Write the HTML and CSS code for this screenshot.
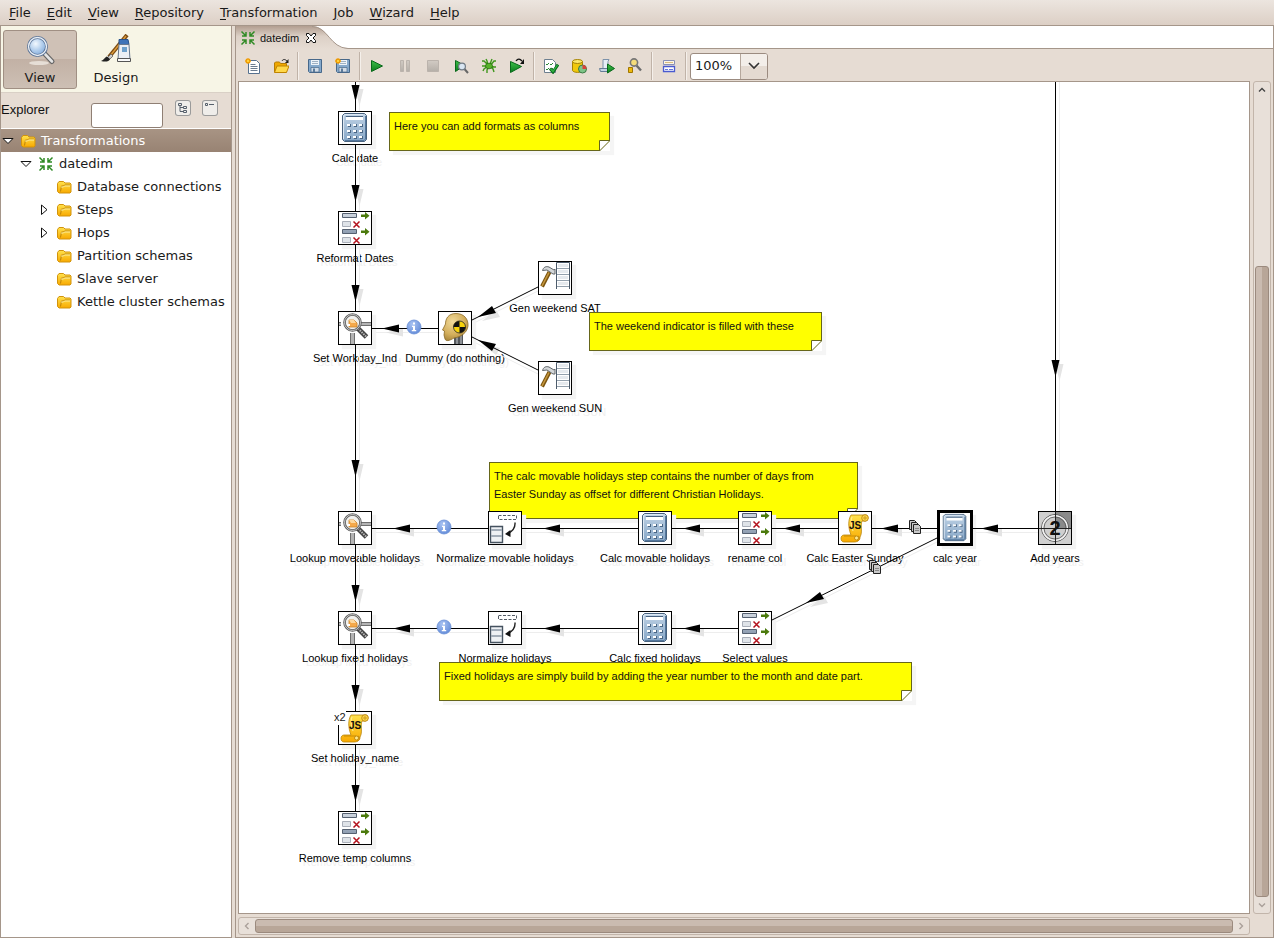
FILE: index.html
```html
<!DOCTYPE html>
<html lang="en">
<head>
<meta charset="utf-8">
<title>datedim</title>
<link rel="stylesheet" href="styles.css">
</head>
<body>
<svg class="sprite" width="0" height="0" aria-hidden="true">
  <defs>
    <linearGradient id="gBlue" x1="0" y1="0" x2="0" y2="1"><stop offset="0" stop-color="#c0d3e6"/><stop offset="1" stop-color="#86a6c6"/></linearGradient>
    <linearGradient id="gFolder" x1="0" y1="0" x2="0" y2="1"><stop offset="0" stop-color="#ffe24d"/><stop offset="1" stop-color="#f8a900"/></linearGradient>
    <linearGradient id="gGreen" x1="0" y1="0" x2="0" y2="1"><stop offset="0" stop-color="#3fbf4a"/><stop offset="1" stop-color="#0a7d1c"/></linearGradient>
    <linearGradient id="gGray" x1="0" y1="0" x2="0" y2="1"><stop offset="0" stop-color="#d2cbc4"/><stop offset="1" stop-color="#b5afa8"/></linearGradient>
    <linearGradient id="gBar" x1="0" y1="0" x2="0" y2="1"><stop offset="0" stop-color="#cfd6df"/><stop offset="1" stop-color="#8d9cb0"/></linearGradient>
    <linearGradient id="gTab" x1="0" y1="0" x2="0" y2="1"><stop offset="0" stop-color="#b29e90"/><stop offset=".45" stop-color="#dcd0c6"/><stop offset="1" stop-color="#e6dcd3"/></linearGradient>
    <radialGradient id="gHead" cx=".4" cy=".3" r=".8"><stop offset="0" stop-color="#f0d99a"/><stop offset=".6" stop-color="#d3ae5b"/><stop offset="1" stop-color="#9c7a32"/></radialGradient>
    <radialGradient id="gInfo" cx=".4" cy=".3" r=".8"><stop offset="0" stop-color="#a9c3f2"/><stop offset="1" stop-color="#5c86d6"/></radialGradient>
    <radialGradient id="gLens" cx=".4" cy=".35" r=".7"><stop offset="0" stop-color="#f2f8fe"/><stop offset=".6" stop-color="#a9c8ea"/><stop offset="1" stop-color="#7fa6d6"/></radialGradient>
  </defs>

  <symbol id="calc" viewBox="0 0 32 32">
    <path d="M5.500 1.500h20l2 2v24l-2 2h-20l-2-2v-24z" fill="url(#gBlue)" stroke="#48627e"/>
    <path d="M26.500 4v23l-1.500 1.500H6" fill="none" stroke="#54779d"/>
    <path d="M4.500 27V4l1.500-1.500h18" fill="none" stroke="#dde8f3"/>
    <path d="M7 5h17v3H7z" fill="#fff"/><path d="M7 5V4.500h17" fill="none" stroke="#47617f"/>
    <g fill="#4a6685"><path d="M9 12h3v3H9zM15 12h3v3h-3zM21 12h3v3h-3zM9 18h3v3H9zM15 18h3v3h-3zM21 18h3v3h-3zM9 24h3v3H9zM15 24h3v3h-3zM21 24h3v3h-3z"/></g>
    <g fill="#fff"><path d="M8 12h3v2H8zM14 12h3v2h-3zM20 12h3v2h-3zM8 18h3v2H8zM14 18h3v2h-3zM20 18h3v2h-3zM8 24h3v2H8zM14 24h3v2h-3zM20 24h3v2h-3z"/></g>
  </symbol>

  <symbol id="select" viewBox="0 0 32 32">
    <g stroke="#556070"><path d="M3.500 1.500h14v4h-14zM3.500 17.500h14v4h-14z" fill="url(#gBar)"/></g>
    <g stroke="#a9aeb8"><path d="M3.500 9.500h8v5h-8zM3.500 25.500h8v5h-8z" fill="#dfe3e8"/></g>
    <path d="M22 2.500h4V0l4.500 3.700L26 7.500V5h-4zM22 18.500h4V16l4.500 3.700L26 23.500V21h-4z" fill="#4b7a0c"/>
    <path d="M14.500 9.500l6 6m0-6l-6 6M14.500 25.500l6 6m0-6l-6 6" stroke="#b3121d" stroke-width="1.500"/>
  </symbol>

  <symbol id="lookup" viewBox="0 0 32 32">
    <g fill="#b4b4b4" stroke="#6f6f6f"><path d="M-1 10.500h34v3H-1z"/><path d="M11.500 20v13h4V20z"/></g>
    <path d="M2 8v8l6 5h11l3-4V8z" fill="#fff"/>
    <path d="M19 16.500L27.500 25" stroke="#444" stroke-width="5"/>
    <path d="M19 16.500L27.500 25" stroke="#b5b5b5" stroke-width="2" stroke-dasharray="1.500 1"/>
    <circle cx="13.500" cy="10.500" r="8" fill="#f1f1ee" stroke="#5b5b5b" stroke-width="2.600"/>
    <circle cx="13.500" cy="10.500" r="8" fill="none" stroke="#c9c9c9" stroke-width="1"/>
    <path d="M10 8h5l3 3v4h-8z" fill="#f5a94a" stroke="#c9832a" stroke-width=".8"/>
    <path d="M8 12h3v2H8z" fill="#fff"/><path d="M10 8h5l2 3h-5z" fill="#fcd9a0"/>
  </symbol>

  <symbol id="dummy" viewBox="0 0 32 32">
    <path d="M15 22h9v10h-9z" fill="#55585c"/><path d="M17 23h2v9h-2zM21 23h2v9h-2z" fill="#8d9196"/>
    <path d="M17 1.500C9 1.500 6.500 7 6.500 12L3.500 18l2 1-.5 4 1 4c1 2.500 4 2 9-1 7-1 13-5 14-12C29.500 7 25 1.500 17 1.500z" fill="url(#gHead)" stroke="#8a6a26" stroke-width=".8"/>
    <circle cx="20.500" cy="15" r="6" fill="#f7d20a" stroke="#222" stroke-width=".8"/>
    <path d="M20.500 15V9a6 6 0 0 0-6 6zM20.500 15v6a6 6 0 0 0 6-6z" fill="#111"/>
  </symbol>

  <symbol id="gen" viewBox="0 0 32 32">
    <path d="M17.500.500h13v27h-13z" fill="#fff"/><path d="M17.500 27V.500h13V27" fill="none" stroke="#4c5b6b"/>
    <path d="M19 2h10v3H19zM19 8h10v3H19zM19 14h10v3H19zM19 20h10v3H19z" fill="#e6eaee"/>
    <path d="M18 6.500h12M18 12.500h12M18 18.500h12M18 24.500h12" stroke="#94a1ad"/>
    <path d="M3 24.500L10.500 10" stroke="#7a5410" stroke-width="4"/>
    <path d="M3 24L10 10.500" stroke="#c5973d" stroke-width="1.600"/>
    <path d="M3.500 8.500C4.500 5 7 4 10 5l5 3 1-1v5h-2l-3-2-3-2z" fill="#d5d8da" stroke="#60666a"/>
  </symbol>

  <symbol id="normalize" viewBox="0 0 32 32">
    <path d="M9.500 3.500h18v4h-18z" fill="none" stroke="#555c66" stroke-dasharray="3 1.500"/>
    <path d="M1.500 14.500h12v16h-12z" fill="#eef1f4" stroke="#45525f" stroke-width="1.400"/>
    <path d="M2 17h11v2H2zM2 23h11v2H2z" fill="#a3adb8"/>
    <path d="M26 10.500c.5 6-3 9-7 11" fill="none" stroke="#222" stroke-width="1.400"/><path d="M16 22l5.500-4v7z" fill="#111"/>
  </symbol>

  <symbol id="js" viewBox="0 0 32 32">
    <path d="M12 3h14c4-1 4 6 0 6h-3c-2 5 1 11-2 16-1 4-3 5-6 5H5c-4 0-4-7 0-7h7C9 15 9 8 12 3z" fill="url(#gFolder)" stroke="#b98408" stroke-width=".8"/>
    <circle cx="26" cy="6" r="3.300" fill="#ffd94f" stroke="#b57c05" stroke-width=".8"/><circle cx="26" cy="6" r="1.200" fill="none" stroke="#b57c05" stroke-width=".7"/>
    <path d="M5 24h12M19 24c3 1 2 5-1 5" fill="none" stroke="#c98c05"/><circle cx="17.500" cy="26" r="2" fill="#ffe98c" stroke="#b57c05" stroke-width=".8"/>
    <path d="M13 5c-2 5 0 10 1 14" fill="none" stroke="#fff0a0"/>
  </symbol>

  <symbol id="sequence" viewBox="0 0 32 32">
    <path d="M0 0h32v32H0z" fill="#cfcfcf"/><path d="M16 0h16v16H16z" fill="#8a8a8a"/>
    <circle cx="16" cy="16" r="13.500" fill="none" stroke="#555"/><circle cx="16" cy="16" r="12.300" fill="none" stroke="#f2f2f2" stroke-width="1.500"/>
    <circle cx="16" cy="16" r="11" fill="none" stroke="#555" stroke-width=".8"/>
    <path d="M0 16.500h32M16.500 0v32" stroke="#222"/>
  </symbol>

  <symbol id="folder" viewBox="0 0 16 16">
    <path d="M1.500 4.500l1.500-2h4.500l1.500 1.500h5l1 1v8l-1 1h-11l-1.500-1.500z" fill="url(#gFolder)" stroke="#d2930c"/>
    <path d="M4.500 12.500l1-5.500h2l1-1h5.500" fill="none" stroke="#b87d05" stroke-width=".9"/><path d="M5 8h2.500l1-1h5.500" fill="none" stroke="#fff3a8" stroke-width=".9"/>
  </symbol>

  <symbol id="trans" viewBox="0 0 16 16">
    <g stroke="#2f8a25" stroke-width="1.500" fill="none"><path d="M1.500 1.500l4 4M6 2v4H2M14.500 1.500l-4 4M10 2v4h4M1.500 14.500l4-4M6 14v-4H2M14.500 14.500l-4-4M10 14v-4h4"/></g>
  </symbol>

  <symbol id="info" viewBox="0 0 16 16">
    <circle cx="8" cy="8" r="7" fill="url(#gInfo)" stroke="#6b90d6" stroke-width=".8"/>
    <path d="M7 3.500h2v2H7zM6 6.700h3v4.300h1.200v1.300H5.800V11H7V8H6z" fill="#fff"/>
  </symbol>
  <symbol id="copies" viewBox="0 0 14 14">
    <g fill="#c9c9c9" stroke="#222"><path d="M1.500.500h5l2 2v7h-7z"/><path d="M3.500 2.500h5l2 2v7h-7z"/><path d="M5.500 4.500h5l2 2v7h-7z"/></g>
    <path d="M7 8.500h4M7 10.500h4" stroke="#777" stroke-width=".8"/>
  </symbol>

  <symbol id="page" viewBox="0 0 16 16"><path d="M3.500 2.500h8l3 3v10h-11z" fill="#fff" stroke="#56718f"/><path d="M5.500 6.500h5M5.500 8.500h7M5.500 10.500h7M5.500 12.500h7" stroke="#6a7c90"/></symbol>
  <symbol id="star" viewBox="0 0 16 16"><path d="M3 0v6M0 3h6M1 1l4 4M5 1L1 5" stroke="#f09a00" stroke-width="1.300"/><circle cx="3" cy="3" r="1.200" fill="#ffd23c"/></symbol>
  <symbol id="disk" viewBox="0 0 16 16"><path d="M1.500 1.500h13v13h-12l-1-1z" fill="#86a9cb" stroke="#47688a"/><path d="M4 2h8v5H4z" fill="#eef3f8"/><path d="M5 3.500h6M5 5.500h6" stroke="#8aa0b5" stroke-width=".8"/><path d="M4 9.500h8V14H4z" fill="#d3dce6" stroke="#47688a" stroke-width=".7"/><path d="M6 10.500h2V14H6z" fill="#5b7a9a"/></symbol>
  <symbol id="play" viewBox="0 0 16 16"><path d="M2.500 2.500l11 5.500-11 5.500z" fill="url(#gGreen)" stroke="#08691a"/></symbol>
</svg>

<nav class="menubar" aria-label="Main menu">
  <button class="menu"><u>F</u>ile</button>
  <button class="menu"><u>E</u>dit</button>
  <button class="menu"><u>V</u>iew</button>
  <button class="menu"><u>R</u>epository</button>
  <button class="menu"><u>T</u>ransformation</button>
  <button class="menu"><u>J</u>ob</button>
  <button class="menu"><u>W</u>izard</button>
  <button class="menu"><u>H</u>elp</button>
</nav>

<main class="workspace">
  <aside class="sidebar">
    <div class="modes">
      <button class="mode mode-active" aria-pressed="true">
        <svg width="32" height="32" viewBox="0 0 32 32"><ellipse cx="15" cy="29" rx="10" ry="2" fill="#e6ded6"/><path d="M20 19l8 8.500" stroke="#666" stroke-width="5" stroke-linecap="round"/><path d="M20.500 19.500l7.500 8" stroke="#e4e4e4" stroke-width="2.600" stroke-linecap="round"/><circle cx="13.500" cy="12.500" r="9" fill="url(#gLens)" stroke="#5a7396" stroke-width="3"/><circle cx="13.500" cy="12.500" r="9" fill="none" stroke="#e8eef5" stroke-width="1.400"/></svg>
        <span>View</span>
      </button>
      <button class="mode" aria-pressed="false">
        <svg width="32" height="32" viewBox="0 0 32 32"><path d="M9 23L27 1" stroke="#7b4a12" stroke-width="4"/><path d="M10 22L26 2" stroke="#dc9c3c" stroke-width="1.400"/><path d="M7 24l4-4 2 2-4 4z" fill="#ccc" stroke="#555" stroke-width=".7"/><path d="M1 27c3-1 4-4 6-4.500L10 25c-1 3-5 3-9 2z" fill="#222"/><path d="M19 5.500h9l1 5h-10z" fill="#3f73b8" stroke="#27518c"/><path d="M19 10.500h10l1 15H18z" fill="#eceff4" stroke="#68788e"/><path d="M22 13h5v5h-5z" fill="#6fa1cc"/><path d="M17.500 24.500h13v3h-13z" fill="#fafafa" stroke="#555"/></svg>
        <span>Design</span>
      </button>
    </div>
    <div class="explorer">
      <label for="filter">Explorer</label>
      <input id="filter" class="filter" type="text">
      <button class="mini" aria-label="Expand all"><svg width="16" height="16" viewBox="0 0 16 16"><path d="M3.500 3.500h3v2h-3zM8.500 6.500h3v2h-3zM8.500 10.500h3v2h-3zM5 6v5.500h3.500M5 7.500h3.500" fill="none" stroke="#56606c"/></svg></button>
      <button class="mini" aria-label="Collapse all"><svg width="16" height="16" viewBox="0 0 16 16"><path d="M3.500 3.500h2v2h-2zM7 4.500h5" fill="none" stroke="#56606c"/></svg></button>
    </div>
    <div class="tree" role="tree">
      <button class="row row-selected" role="treeitem" aria-expanded="true"><svg class="twist" viewBox="0 0 12 12"><path d="M1 3.500h10L6 8.500z" fill="#fff" stroke="#111"/></svg><svg class="icon"><use href="#folder"/></svg>Transformations</button>
      <button class="row level-2" role="treeitem" aria-expanded="true"><svg class="twist" viewBox="0 0 12 12"><path d="M1 3.500h10L6 8.500z" fill="#fff" stroke="#111"/></svg><svg class="icon"><use href="#trans"/></svg>datedim</button>
      <button class="row level-3" role="treeitem"><span class="twist"></span><svg class="icon"><use href="#folder"/></svg>Database connections</button>
      <button class="row level-3" role="treeitem" aria-expanded="false"><svg class="twist" viewBox="0 0 12 12"><path d="M3.500 1v9.500L9 5.700z" fill="#fff" stroke="#111"/></svg><svg class="icon"><use href="#folder"/></svg>Steps</button>
      <button class="row level-3" role="treeitem" aria-expanded="false"><svg class="twist" viewBox="0 0 12 12"><path d="M3.500 1v9.500L9 5.700z" fill="#fff" stroke="#111"/></svg><svg class="icon"><use href="#folder"/></svg>Hops</button>
      <button class="row level-3" role="treeitem"><span class="twist"></span><svg class="icon"><use href="#folder"/></svg>Partition schemas</button>
      <button class="row level-3" role="treeitem"><span class="twist"></span><svg class="icon"><use href="#folder"/></svg>Slave server</button>
      <button class="row level-3" role="treeitem"><span class="twist"></span><svg class="icon"><use href="#folder"/></svg>Kettle cluster schemas</button>
    </div>
  </aside>

  <section class="editor">
    <div class="tabs">
      <div class="tab">
        <svg class="tab-shape" width="112" height="23" viewBox="0 0 112 23"><path d="M0 0h76c16 0 18 22 36 22.500V23H0z" fill="url(#gTab)"/><path d="M76 .500c16 0 18 21.500 36 22" fill="none" stroke="#a5968a"/></svg>
        <svg class="tab-icon"><use href="#trans"/></svg>
        <span class="tab-name">datedim</span>
        <button class="close" aria-label="Close tab"><svg width="12" height="12" viewBox="0 0 12 12"><path d="M1.500 1.500h2.500l2 2.500 2-2.500h2.500v2L8 6l2.500 2.500v2H8L6 8l-2 2.500H1.500v-2L4 6 1.500 3.500z" fill="#fff" stroke="#111"/></svg></button>
      </div>
    </div>

    <div class="toolbar" role="toolbar">
      <button class="tool" aria-label="New"><svg viewBox="0 0 16 16"><use href="#page"/><use href="#star"/></svg></button>
      <button class="tool" aria-label="Open"><svg viewBox="0 0 16 16"><path d="M1.500 14V5l1-1h4l1 1.500h6V14z" fill="#f0a800" stroke="#b57c05"/><path d="M1.500 14.500L4 8h12l-2.500 6.500z" fill="#ffd84a" stroke="#c08400"/><path d="M9 3c1-2 3-2 5 0" fill="none" stroke="#222"/><path d="M15.500 1v4H12z" fill="#222"/></svg></button>
      <span class="sep"></span>
      <button class="tool" aria-label="Save"><svg><use href="#disk"/></svg></button>
      <button class="tool" aria-label="Save as"><svg viewBox="0 0 16 16"><use href="#disk"/><use href="#star"/></svg></button>
      <span class="sep"></span>
      <button class="tool" aria-label="Run"><svg><use href="#play"/></svg></button>
      <button class="tool" aria-label="Pause" disabled><svg viewBox="0 0 16 16"><path d="M3.500 2.500h3v11h-3zM9.500 2.500h3v11h-3z" fill="url(#gGray)" stroke="#bbb3ac"/></svg></button>
      <button class="tool" aria-label="Stop" disabled><svg viewBox="0 0 16 16"><path d="M2.500 2.500h11v11h-11z" fill="url(#gGray)" stroke="#bbb3ac"/></svg></button>
      <button class="tool" aria-label="Preview"><svg viewBox="0 0 16 16"><path d="M2.500 2.500l9 5-9 6z" fill="url(#gGreen)" stroke="#08691a"/><path d="M11 10.500l4 4.500" stroke="#666" stroke-width="2"/><circle cx="9" cy="8.500" r="3.400" fill="#d9e6f2" stroke="#707a84" stroke-width="1.200"/></svg></button>
      <button class="tool" aria-label="Debug"><svg viewBox="0 0 16 16"><g fill="none" stroke="#3f971c" stroke-width="1.400"><path d="M1 3h2l4 4M5 1l1 2 1 4M11 1L9 6M15 3h-2L9 8M1 8l6 0M15 9h-2L9 8M2 13l1-2 4-3M6 15V12l2-4M13 14l-1-3L9 8"/></g><ellipse cx="8" cy="8" rx="3.500" ry="2.800" fill="#58b32a" stroke="#277010" stroke-width=".8"/></svg></button>
      <button class="tool" aria-label="Replay"><svg viewBox="0 0 16 16"><path d="M1.500 3.500l11 5-11 6z" fill="url(#gGreen)" stroke="#08691a"/><path d="M7 3c2-3 4-2 6 0" fill="none" stroke="#111" stroke-width="1.300"/><path d="M15 1v5h-4z" fill="#111"/></svg></button>
      <span class="sep"></span>
      <button class="tool" aria-label="Verify"><svg viewBox="0 0 16 16"><path d="M1.500 1.500h8l3 3v10h-11z" fill="#fff" stroke="#6d7f8f"/><path d="M3 6l1 1 2-2M7 6l1 1 2-2M3 11l1 1 2-2M7 11l1 1 2-2" fill="none" stroke="#2a8a35"/><path d="M7 10.500l3 3.500 5-7.500" fill="none" stroke="#0a6d1c" stroke-width="3"/><path d="M7.500 11l2.500 2.500L14.500 7" fill="none" stroke="#35b848" stroke-width="1.200"/></svg></button>
      <button class="tool" aria-label="Impact"><svg viewBox="0 0 16 16"><path d="M1.500 3.500v9c1 2.500 9 2.500 10 0v-9z" fill="#f0c80c" stroke="#a58200"/><ellipse cx="6.500" cy="3.500" rx="5" ry="2" fill="#fbe86a" stroke="#a58200"/><circle cx="11.500" cy="11" r="4" fill="#7ec487" stroke="#3b7a45"/><path d="M11.500 11V7a4 4 0 0 1 4 4z" fill="#d8413a"/></svg></button>
      <button class="tool" aria-label="SQL"><svg viewBox="0 0 16 16"><path d="M4 1.500h6l-1 2v9H3l1-2z" fill="#e6edf5" stroke="#7c92aa"/><path d="M.5 10.500h9v3h-8z" fill="#c7d5e4" stroke="#647c96"/><path d="M8.500 6l7 4.500-7 4.500z" fill="url(#gGreen)" stroke="#08691a"/></svg></button>
      <button class="tool" aria-label="Explore database"><svg viewBox="0 0 16 16"><path d="M9.500 7.500l4.500 5" stroke="#6c6c6c" stroke-width="2.400"/><circle cx="7" cy="4.500" r="3.600" fill="#f5dc7a" stroke="#777" stroke-width="1.600"/><path d="M1.500 9.500h4v5h-4z" fill="#edb90c" stroke="#a07600"/></svg></button>
      <span class="sep"></span>
      <button class="tool" aria-label="Show results"><svg viewBox="0 0 16 16"><path d="M2.500 2.500h11v4h-11z" fill="#fdf6e6" stroke="#8890b8"/><path d="M2.500 8.500h11v5h-11z" fill="#fff" stroke="#4a5bd0" stroke-width="1.300"/><path d="M4 4.500h8" stroke="#d9bd80"/><path d="M4 11.500h3M8 11.500h4" stroke="#6a78d8"/></svg></button>
      <span class="sep"></span>
      <div class="zoom">
        <input class="zoom-value" type="text" value="100%" aria-label="Zoom">
        <button class="zoom-open" aria-label="Zoom levels"><svg width="12" height="8" viewBox="0 0 12 8"><path d="M1 1l5 5 5-5" fill="none" stroke="#333" stroke-width="1.600"/></svg></button>
      </div>
    </div>

    <div class="view">
      <div class="canvas">
        <div class="note" style="left:150px;top:30px;width:221px">Here you can add formats as columns<svg class="fold" viewBox="0 0 11 11"><path d="M11 0v11H0z" fill="#fff"/><path d="M.500 11V.500H11z" fill="#fff" stroke="#66661a"/></svg></div>
        <div class="note" style="left:350px;top:230px;width:233px">The weekend indicator is filled with these<svg class="fold" viewBox="0 0 11 11"><path d="M11 0v11H0z" fill="#fff"/><path d="M.500 11V.500H11z" fill="#fff" stroke="#66661a"/></svg></div>
        <div class="note" style="left:250px;top:380px;width:369px">The calc movable holidays step contains the number of days from<br>Easter Sunday as offset for different Christian Holidays.<svg class="fold" viewBox="0 0 11 11"><path d="M11 0v11H0z" fill="#fff"/><path d="M.500 11V.500H11z" fill="#fff" stroke="#66661a"/></svg></div>
        <div class="note" style="left:200px;top:580px;width:473px">Fixed holidays are simply build by adding the year number to the month and date part.<svg class="fold" viewBox="0 0 11 11"><path d="M11 0v11H0z" fill="#fff"/><path d="M.500 11V.500H11z" fill="#fff" stroke="#66661a"/></svg></div>

        <div class="step" style="left:99px;top:29px"><svg class="step-icon"><use href="#calc"/></svg><span class="step-name">Calc date</span></div>
        <div class="step" style="left:99px;top:129px"><svg class="step-icon"><use href="#select"/></svg><span class="step-name">Reformat Dates</span></div>
        <div class="step" style="left:99px;top:229px"><svg class="step-icon"><use href="#lookup"/></svg><span class="step-name">Set Workday_Ind</span></div>
        <div class="step" style="left:199px;top:229px"><svg class="step-icon"><use href="#dummy"/></svg><span class="step-name">Dummy (do nothing)</span></div>
        <div class="step" style="left:299px;top:179px"><svg class="step-icon"><use href="#gen"/></svg><span class="step-name step-name-flat">Gen weekend SAT</span></div>
        <div class="step" style="left:299px;top:279px"><svg class="step-icon"><use href="#gen"/></svg><span class="step-name">Gen weekend SUN</span></div>
        <div class="step" style="left:99px;top:429px"><svg class="step-icon"><use href="#lookup"/></svg><span class="step-name">Lookup moveable holidays</span></div>
        <div class="step" style="left:249px;top:429px"><svg class="step-icon"><use href="#normalize"/></svg><span class="step-name">Normalize movable holidays</span></div>
        <div class="step" style="left:399px;top:429px"><svg class="step-icon"><use href="#calc"/></svg><span class="step-name">Calc movable holidays</span></div>
        <div class="step" style="left:499px;top:429px"><svg class="step-icon"><use href="#select"/></svg><span class="step-name">rename col</span></div>
        <div class="step" style="left:599px;top:429px"><svg class="step-icon"><use href="#js"/></svg><span class="glyph glyph-js">JS</span><span class="step-name">Calc Easter Sunday</span></div>
        <div class="step step-selected" style="left:699px;top:429px"><svg class="step-icon"><use href="#calc"/></svg><span class="step-name">calc year</span></div>
        <div class="step" style="left:799px;top:429px"><svg class="step-icon"><use href="#sequence"/></svg><span class="glyph glyph-seq">2</span><span class="step-name">Add years</span></div>
        <div class="step" style="left:99px;top:529px"><svg class="step-icon"><use href="#lookup"/></svg><span class="step-name">Lookup fixed holidays</span></div>
        <div class="step" style="left:249px;top:529px"><svg class="step-icon"><use href="#normalize"/></svg><span class="step-name step-name-flat">Normalize holidays</span></div>
        <div class="step" style="left:399px;top:529px"><svg class="step-icon"><use href="#calc"/></svg><span class="step-name step-name-flat">Calc fixed holidays</span></div>
        <div class="step" style="left:499px;top:529px"><svg class="step-icon"><use href="#select"/></svg><span class="step-name step-name-flat">Select values</span></div>
        <div class="step" style="left:99px;top:629px"><svg class="step-icon"><use href="#js"/></svg><span class="glyph glyph-js">JS</span><span class="count">x2</span><span class="step-name">Set holiday_name</span></div>
        <div class="step" style="left:99px;top:729px"><svg class="step-icon"><use href="#select"/></svg><span class="step-name">Remove temp columns</span></div>

        <svg class="hops" width="1010" height="831" viewBox="0 0 1010 831">
          <g fill="none" stroke="#ededed">
            <path d="M120.500 0V29M120.500 67V129M120.500 167V229M120.500 267V429M120.500 467V529M120.500 567V629M120.500 667V729M820.500 0V429"/>
            <path d="M137 250.500H199M137 450.500H249M287 450.500H399M437 450.500H499M537 450.500H599M637 450.500H698M737 450.500H799M137 550.500H249M287 550.500H399M437 550.500H499"/>
            <path d="M299 209L237 240M299 292L237 261M698 460L537 540"/>
          </g>
          <g fill="#e4e4e4">
            <path d="M116.500 7h8l-4 17zM116.500 107h8l-4 17zM116.500 207h8l-4 17zM116.500 382h8l-4 17zM116.500 507h8l-4 17zM116.500 607h8l-4 17zM116.500 707h8l-4 17zM816.500 282h8l-4 17z"/>
            <path d="M147 250.500l17-4v8zM158 450.500l17-4v8zM308 450.500l17-4v8zM448 450.500l17-4v8zM548 450.500l17-4v8zM646 450.500l17-4v8zM746 450.500l17-4v8zM158 550.500l17-4v8zM308 550.500l17-4v8zM448 550.500l17-4v8z"/>
            <path d="M243 239l14-11 4 7zM243 262l14 11 4-7zM571 525l14-11 4 7z"/>
          </g>
          <g fill="none" stroke="#000">
            <path d="M116.500 0V29M116.500 63V129M116.500 163V229M116.500 263V429M116.500 463V529M116.500 563V629M116.500 663V729M816.500 0V429"/>
            <path d="M133 246.500H199M133 446.500H249M283 446.500H399M433 446.500H499M533 446.500H599M633 446.500H698M734 446.500H799M133 546.500H249M283 546.500H399M433 546.500H499"/>
            <path d="M299 205L233 238M299 288L233 255M698 456L533 538"/>
          </g>
          <g fill="#000">
            <path d="M112.500 3h8l-4 17zM112.500 103h8l-4 17zM112.500 203h8l-4 17zM112.500 378h8l-4 17zM112.500 503h8l-4 17zM112.500 603h8l-4 17zM112.500 703h8l-4 17zM812.500 278h8l-4 17z"/>
            <path d="M143 246.500l17-4v8zM154 446.500l17-4v8zM304 446.500l17-4v8zM444 446.500l17-4v8zM544 446.500l17-4v8zM642 446.500l17-4v8zM742 446.500l17-4v8zM154 546.500l17-4v8zM304 546.500l17-4v8zM444 546.500l17-4v8z"/>
            <path d="M239 235l14-11 4 7zM239 258l14 11 4-7zM567 521l14-11 4 7z"/>
          </g>
          <use href="#info" x="167" y="237" width="16" height="16"/>
          <use href="#info" x="197" y="437" width="16" height="16"/>
          <use href="#info" x="197" y="537" width="16" height="16"/>
          <use href="#copies" x="669" y="438" width="14" height="14"/>
          <use href="#copies" x="629" y="478" width="14" height="14"/>
        </svg>
      </div>

      <div class="scroll scroll-v">
        <button class="arrow" aria-label="Scroll up"><svg width="8" height="8" viewBox="0 0 8 8"><path d="M1 5.500l3-3 3 3" fill="none" stroke="#444" stroke-width="1.400"/></svg></button>
        <div class="track"><div class="thumb"></div></div>
        <button class="arrow" aria-label="Scroll down"><svg width="8" height="8" viewBox="0 0 8 8"><path d="M1 2.500l3 3 3-3" fill="none" stroke="#aaa09a" stroke-width="1.400"/></svg></button>
      </div>
      <div class="scroll scroll-h">
        <button class="arrow" aria-label="Scroll left"><svg width="8" height="8" viewBox="0 0 8 8"><path d="M5.500 1l-3 3 3 3" fill="none" stroke="#aaa09a" stroke-width="1.400"/></svg></button>
        <div class="track"><div class="thumb"></div></div>
        <button class="arrow" aria-label="Scroll right"><svg width="8" height="8" viewBox="0 0 8 8"><path d="M2.500 1l3 3-3 3" fill="none" stroke="#aaa09a" stroke-width="1.400"/></svg></button>
      </div>
    </div>
  </section>
</main>
</body>
</html>
```
FILE: styles.css
```css
:root {
  --bg: #e6dcd3;
  --edge: #a5968a;
  --ui: "DejaVu Sans", sans-serif;
  --small: "Liberation Sans", Arial, sans-serif;
}

* { box-sizing: border-box; }

body {
  margin: 0;
  height: 100vh;
  display: flex;
  flex-direction: column;
  overflow: hidden;
  background: var(--bg);
  color: #1a1a1a;
  font: 13px/16px var(--ui);
}

button, input {
  margin: 0;
  padding: 0;
  border: 0;
  background: none;
  color: inherit;
  font: inherit;
}

svg { display: block; flex: none; }
.sprite { position: absolute; }

.menubar {
  flex: none;
  display: flex;
  height: 26px;
  padding-left: 1px;
  background: linear-gradient(#ece5df, #dccfc5);
  border-bottom: 1px solid var(--edge);
}
.menu { padding: 0 8px; }
.menu u { text-underline-offset: 2px; }

.workspace {
  flex: 1;
  min-height: 0;
  display: flex;
  gap: 3px;
}

/* sidebar */
.sidebar {
  flex: none;
  width: 232px;
  display: flex;
  flex-direction: column;
  border: 1px solid var(--edge);
  border-top: 0;
  background: #fff;
}
.modes {
  display: flex;
  gap: 2px;
  height: 67px;
  padding: 4px 2px 3px;
  background: #f7f5e6;
  border-bottom: 1px solid #d9d0c6;
}
.mode {
  width: 74px;
  height: 59px;
  display: flex;
  flex-direction: column;
  align-items: center;
  gap: 3px;
  padding-top: 3px;
  border: 1px solid transparent;
  border-radius: 3px;
}
.mode span { line-height: 18px; }
.mode-active {
  border-color: #a08f83;
  background: linear-gradient(#cfc1b6 50%, #c2b1a5 50%, #cdbfb4);
}
.explorer {
  display: flex;
  align-items: flex-start;
  height: 36px;
  padding-top: 7px;
  background: var(--bg);
  border-bottom: 1px solid #fff;
}
.explorer label {
  flex: none;
  width: 90px;
  font: 13px/20px var(--small);
  color: #111;
}
.filter {
  width: 72px;
  height: 25px;
  margin: 3px 12px 0 0;
  padding: 0 4px;
  background: #fff;
  border: 1px solid #8f7f74;
  border-radius: 3px;
}
.mini {
  width: 16px;
  height: 16px;
  margin-right: 11px;
  background: #efedea;
  border-radius: 3px;
  box-shadow: inset 0 0 0 1px #9a9a9a;
}
.tree { display: flex; flex-direction: column; }
.row {
  display: flex;
  align-items: center;
  height: 23px;
  padding-left: 1px;
  text-align: left;
  white-space: nowrap;
}
.row-selected {
  color: #fff;
  background: linear-gradient(#a89484, #988373);
}
.level-2 { padding-left: 19px; }
.level-3 { padding-left: 37px; }
.twist { flex: none; width: 12px; height: 12px; margin-right: 6px; }
.icon { width: 16px; height: 16px; margin-right: 5px; }

/* editor */
.editor {
  flex: 1;
  min-width: 0;
  display: flex;
  flex-direction: column;
  border: 1px solid var(--edge);
  border-top: 0;
}
.tabs {
  flex: none;
  display: flex;
  height: 23px;
  background: #fff;
  border-bottom: 1px solid var(--edge);
}
.tab {
  position: relative;
  display: flex;
  align-items: center;
  width: 112px;
  height: 23px;
  padding-left: 4px;
}
.tab-shape { position: absolute; inset: 0; }
.tab-icon, .tab-name, .close { position: relative; }
.tab-icon { width: 16px; height: 16px; }
.tab-name { margin: 0 6px 0 4px; font: 11px/16px var(--small); color: #111; }

.toolbar {
  flex: none;
  display: flex;
  align-items: center;
  height: 32px;
  padding: 2px 0 0 3px;
}
.tool {
  flex: none;
  width: 28px;
  height: 28px;
  display: grid;
  place-items: center;
}
.tool svg { width: 16px; height: 16px; }
.sep {
  flex: none;
  width: 6px;
  height: 28px;
  background: linear-gradient(#c0b3a8, #c0b3a8) 2px 0 / 1px 100% no-repeat, linear-gradient(#f5f0eb, #f5f0eb) 3px 0 / 1px 100% no-repeat;
}
.zoom {
  display: flex;
  height: 27px;
  margin-left: 1px;
  border: 1px solid #9b8b80;
  border-radius: 3px;
  overflow: hidden;
  background: #fff;
}
.zoom-value { width: 49px; padding-left: 4px; }
.zoom-open {
  width: 27px;
  display: grid;
  place-items: center;
  border-left: 1px solid #b5a79c;
  background: linear-gradient(#f3eee9 50%, #e4dad1 50%);
}

.view {
  flex: 1;
  min-height: 0;
  display: grid;
  grid-template-columns: minmax(0, 1fr) 18px;
  grid-template-rows: minmax(0, 1fr) 18px;
  gap: 3px;
  padding: 0 2px 2px;
}
.canvas {
  position: relative;
  overflow: hidden;
  background: #fff;
  border: 1px solid var(--edge);
}
.hops { position: absolute; inset: 0; pointer-events: none; }

.note {
  position: absolute;
  padding: 4px 4px 15px;
  background: #ff0;
  border: 1px solid #66661a;
  box-shadow: 4px 4px 1px #f5f5f5;
  color: #111;
  font: 11px/18px var(--small);
  white-space: nowrap;
}
.fold { position: absolute; right: -1px; bottom: -1px; width: 11px; height: 11px; }

.step {
  position: absolute;
  width: 34px;
  height: 34px;
  border: 1px solid #000;
  background: #fff;
  box-shadow: 4px 4px 1px #f3f3f3;
}
.step-selected { outline: 1px solid #000; border-width: 2px; }
.step-icon { width: 32px; height: 32px; }
.step-selected .step-icon { width: 30px; height: 30px; }
.step-name {
  position: absolute;
  top: 38px;
  left: 50%;
  transform: translateX(-50%);
  font: 11px/16px var(--small);
  color: #000;
  text-shadow: 4px 4px 0 #f0f0f0;
  white-space: nowrap;
}
.step-name-flat { text-shadow: none; }
.step-selected .step-name { top: 37px; }
.count {
  position: absolute;
  left: -5px;
  top: -3px;
  background: #fff;
  font: 11px/16px var(--small);
}
.glyph {
  position: absolute;
  inset: 0;
  color: #111;
  text-align: center;
}
.glyph-js { font: bold 10px/28px var(--small); }
.glyph-seq { font: bold 20px/32px var(--small); }

/* scrollbars */
.scroll {
  display: flex;
  background: #e8e0d9;
  border: 1px solid #c2b5aa;
  border-radius: 3px;
}
.scroll-v { flex-direction: column; }
.arrow { flex: none; width: 16px; height: 16px; display: grid; place-items: center; }
.track { flex: 1; display: flex; min-width: 0; min-height: 0; }
.thumb { border: 1px solid #9b8a7e; border-radius: 3px; }
.scroll-v .track { padding: 0 1px; align-items: flex-end; }
.scroll-v .thumb { width: 100%; height: 79%; background: linear-gradient(90deg, #cabbb0 50%, #b8a698 50%); }
.scroll-h .track { padding: 1px 0; }
.scroll-h .thumb { width: 100%; background: linear-gradient(#cabbb0 50%, #b8a698 50%); }
```
